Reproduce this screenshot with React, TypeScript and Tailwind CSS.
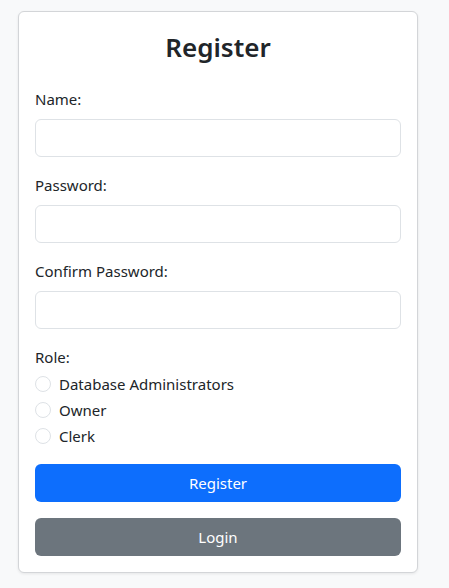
import React from "react";

function Field({ label, type }: { label: string; type: string }) {
  return (
    <div className="mb-4">
      <label className="mb-2 block h-6 leading-6">{label}</label>
      <input
        type={type}
        className="block h-[38px] w-full rounded-[6px] border border-[#dee2e6] bg-white px-3 outline-none"
      />
    </div>
  );
}

function Radio({ label }: { label: string }) {
  return (
    <div className="flex h-6 items-center mb-[2px]">
      <span className="h-4 w-4 rounded-full border border-[#dee2e6] bg-white" />
      <span className="ml-2 leading-6">{label}</span>
    </div>
  );
}

export default function App() {
  return (
    <div
      className="min-h-[588px] w-full bg-[#f8f9fa] pt-[11px] text-[15px] text-[#212529]"
      style={{ fontFamily: '"Noto Sans", "Open Sans", sans-serif' }}
    >
      <div className="ml-[18px] w-[400px] rounded-[6px] border border-[#d3d5d8] bg-white p-4 shadow-[0_1px_3px_rgba(0,0,0,0.08)]">
        <h2 className="mb-[22px] mt-[2px] h-[35px] text-center text-[26px] font-semibold leading-[35px]">Register</h2>
        <Field label="Name:" type="text" />
        <Field label="Password:" type="password" />
        <Field label="Confirm Password:" type="password" />
        <div className="mb-4">
          <div className="mb-[3px] h-6 leading-6">Role:</div>
          <Radio label="Database Administrators" />
          <Radio label="Owner" />
          <Radio label="Clerk" />
        </div>
        <button className="mb-4 block h-[38px] w-full rounded-[6px] bg-[#0d6efd] text-white">Register</button>
        <button className="block h-[38px] w-full rounded-[6px] bg-[#6c757d] text-white">Login</button>
      </div>
    </div>
  );
}
